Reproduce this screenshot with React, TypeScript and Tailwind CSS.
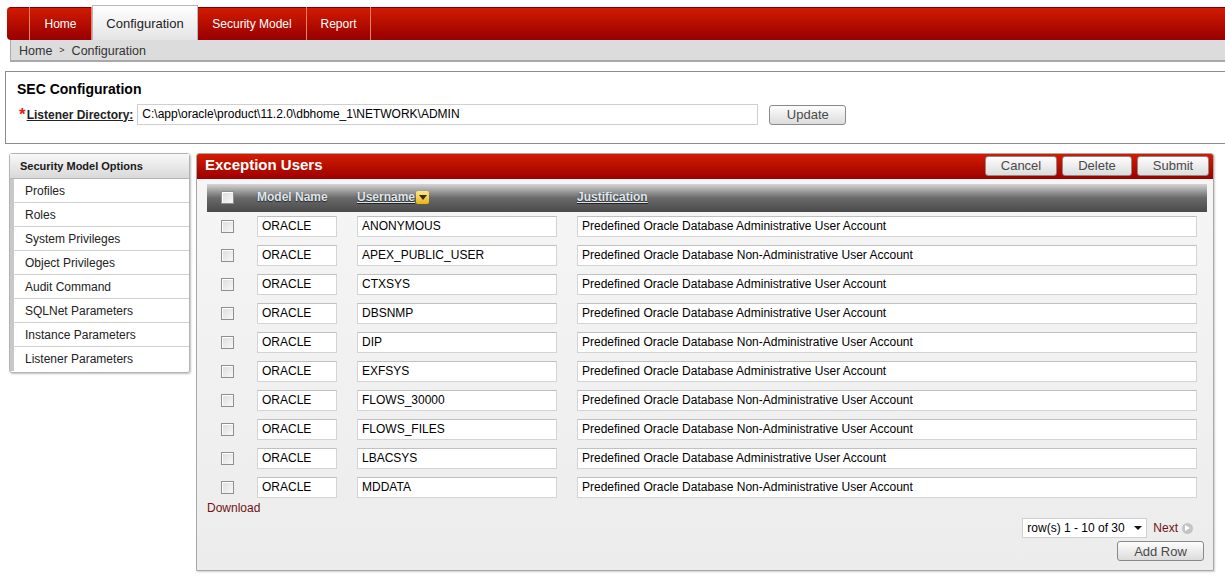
import React from "react";

const rows = [
  ["ANONYMOUS", "Predefined Oracle Database Administrative User Account"],
  ["APEX_PUBLIC_USER", "Predefined Oracle Database Non-Administrative User Account"],
  ["CTXSYS", "Predefined Oracle Database Administrative User Account"],
  ["DBSNMP", "Predefined Oracle Database Administrative User Account"],
  ["DIP", "Predefined Oracle Database Non-Administrative User Account"],
  ["EXFSYS", "Predefined Oracle Database Administrative User Account"],
  ["FLOWS_30000", "Predefined Oracle Database Non-Administrative User Account"],
  ["FLOWS_FILES", "Predefined Oracle Database Non-Administrative User Account"],
  ["LBACSYS", "Predefined Oracle Database Administrative User Account"],
  ["MDDATA", "Predefined Oracle Database Non-Administrative User Account"],
];

const options = [
  "Profiles",
  "Roles",
  "System Privileges",
  "Object Privileges",
  "Audit Command",
  "SQLNet Parameters",
  "Instance Parameters",
  "Listener Parameters",
];

const Check = () => (
  <span className="block w-[13px] h-[13px] border border-[#8f8f8f] bg-gradient-to-br from-[#dcdcdc] to-[#f8f8f8] shadow-[inset_1px_1px_0_#fff]" />
);

const Btn = ({ label, className = "" }: { label: string; className?: string }) => (
  <button
    className={`h-[20px] rounded-[3px] border border-[#8a8a8a] bg-gradient-to-b from-[#fdfdfd] to-[#dcdcdc] text-[13px] leading-none text-[#4a4a4a] ${className}`}
  >
    {label}
  </button>
);

const Field = ({ value, w }: { value: string; w: string }) => (
  <div className={`${w} h-[21px] border border-[#d4d4d4] border-t-[#c0c0c0] bg-white pl-[4px] text-[12px] leading-[19px] text-black`}>
    {value}
  </div>
);

const App = () => {
  return (
    <div className="w-[1225px] h-[579px] overflow-hidden bg-white font-['Liberation_Sans',Arial,sans-serif] text-[12px] text-[#222]">
      {/* tabs */}
      <div className="pl-[7px] pt-[5px]">
        <div className="relative h-[35px]">
          <div className="absolute left-0 right-0 top-[2px] h-[33px] rounded-l-[4px] border-t border-[#7a0000] bg-gradient-to-b from-[#d21a00] to-[#980000]" />
          <div className="relative flex h-[35px] items-end">
            <div className="h-[33px] w-[23px] border-r border-[#e8806c]" />
            <div className="flex h-[33px] w-[62px] items-center justify-center border-r border-[#e8806c] text-[12px] text-white">Home</div>
            <div className="flex h-[35px] w-[106px] items-center justify-center border border-b-0 border-[#b8b8b8] bg-gradient-to-b from-white to-[#e4e4e4] pt-[2px] text-[13px] text-[#222]">Configuration</div>
            <div className="flex h-[33px] w-[109px] items-center justify-center border-r border-[#e8806c] text-[12px] text-white">Security Model</div>
            <div className="flex h-[33px] w-[64px] items-center justify-center border-r border-[#e8806c] text-[12px] text-white">Report</div>
          </div>
        </div>
      </div>
      {/* breadcrumb */}
      <div className="ml-[10px] flex h-[22px] items-center border-b-2 border-l border-[#a9a9a9] bg-[#dcdcdc] pl-[8px] pt-[2px] text-[12.5px] text-[#333]">
        Home <span className="mx-[7px] text-[9px]">&gt;</span> Configuration
      </div>

      {/* SEC configuration */}
      <div className="ml-[5px] mt-[9px] h-[73px] border-y border-l border-[#8c8c8c] pl-[11px] pt-[8px]">
        <div className="text-[14px] font-bold leading-[18px] text-black">SEC Configuration</div>
        <div className="mt-[6px] flex items-center">
          <span className="ml-[2px] text-[17px] font-bold leading-none text-[#e02020]">*</span>
          <span className="ml-[1px] text-[12px] font-bold text-[#222] underline">Listener Directory:</span>
          <div className="ml-[4px] h-[21px] w-[621px] border border-[#cfcfcf] bg-white pl-[4px] text-[12px] leading-[19px] text-black">
            C:\app\oracle\product\11.2.0\dbhome_1\NETWORK\ADMIN
          </div>
          <Btn label="Update" className="ml-[11px] w-[77px]" />
        </div>
      </div>

      {/* body */}
      <div className="mt-[9px] flex items-start">
        {/* sidebar */}
        <div className="ml-[9px] w-[181px] rounded-[3px] border border-[#b4b4b4] shadow-[1px_1px_2px_rgba(0,0,0,0.25)]">
          <div className="flex h-[25px] items-center border-b border-[#b4b4b4] bg-gradient-to-b from-[#f8f8f8] to-[#d9d9d9] pl-[10px] text-[11px] font-bold text-[#1a1a1a]">
            Security Model Options
          </div>
          <div className="pb-[1px]">
            {options.map((o) => (
              <div key={o} className="flex h-[24px] items-center border-b border-l-4 border-[#d0d0d0] border-l-[#c8c8c8] bg-white pl-[11px] text-[12px] text-[#222] last:border-b-0">
                {o}
              </div>
            ))}
          </div>
        </div>

        {/* main panel */}
        <div className="ml-[6px] flex h-[418px] w-[1018px] flex-col rounded-t-[3px] border border-[#a8a8a8] bg-gradient-to-b from-[#f6f6f6] to-[#ececec] shadow-[1px_1px_2px_rgba(0,0,0,0.2)]">
          <div className="flex h-[25px] items-center justify-between rounded-t-[2px] bg-gradient-to-b from-[#d41c00] to-[#9c0000] pb-[2px] pl-[8px] pr-[4px]">
            <span className="text-[15px] font-bold text-white">Exception Users</span>
            <div className="flex gap-[5px]">
              <Btn label="Cancel" className="w-[72px]" />
              <Btn label="Delete" className="w-[70px]" />
              <Btn label="Submit" className="w-[72px]" />
            </div>
          </div>

          <div className="ml-[10px] mt-[5px] w-[1000px]">
            <div className="flex h-[28px] items-center bg-gradient-to-b from-[#d6d6d6] via-[#6a6a6a] to-[#4a4a4a] pb-[2px] text-[12px] font-bold text-[#dfe6ee] [text-shadow:0_1px_1px_#222]">
              <div className="ml-[14px]"><Check /></div>
              <span className="ml-[23px] w-[100px]">Model Name</span>
              <span className="flex w-[220px] items-center">
                <span className="underline">Username</span>
                <span className="ml-[1px] flex h-[13px] w-[13px] items-center justify-center rounded-[2px] bg-gradient-to-b from-[#ffe680] to-[#e8b400]">
                  <svg width="8" height="5" viewBox="0 0 8 5"><path d="M0 0h8L4 5z" fill="#3a2a00" /></svg>
                </span>
              </span>
              <span className="underline">Justification</span>
            </div>
            {rows.map(([u, j]) => (
              <div key={u} className="flex h-[29px] items-center">
                <div className="ml-[14px]"><Check /></div>
                <div className="ml-[23px]"><Field value="ORACLE" w="w-[80px]" /></div>
                <div className="ml-[20px]"><Field value={u} w="w-[200px]" /></div>
                <div className="ml-[20px]"><Field value={j} w="w-[620px]" /></div>
              </div>
            ))}
            <div className="-mt-[1px] text-[12px] leading-[14px] text-[#6e1414]">Download</div>
          </div>

          <div className="mt-[3px] flex items-center justify-end pr-[20px]">
            <div className="flex h-[20px] w-[125px] items-center justify-between border border-[#d0d0d0] bg-white pl-[4px] pr-[4px] text-[12px] text-black">
              row(s) 1 - 10 of 30
              <svg width="8" height="4" viewBox="0 0 8 4"><path d="M0 0h8L4 4z" fill="#111" /></svg>
            </div>
            <span className="ml-[6px] text-[12px] text-[#6e1414]">Next</span>
            <span className="ml-[4px] flex h-[11px] w-[11px] items-center justify-center rounded-full bg-[#c4c4c4]">
              <svg width="5" height="6" viewBox="0 0 5 6"><path d="M0 0l5 3-5 3z" fill="#fff" /></svg>
            </span>
          </div>
          <div className="mt-[3px] flex justify-end pr-[9px]">
            <Btn label="Add Row" className="w-[87px]" />
          </div>
        </div>
      </div>
    </div>
  );
};

export default App;
